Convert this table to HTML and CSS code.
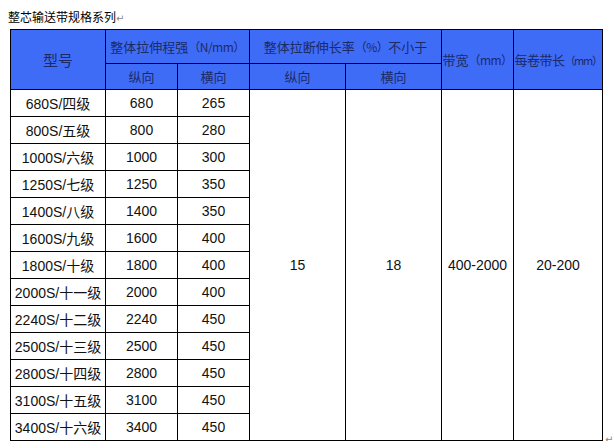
FILE: index.html
```html
<!DOCTYPE html>
<html lang="zh">
<head>
<meta charset="utf-8">
<link rel="stylesheet" href="styles.css">
</head>
<body>
<p class="title">整芯输送带规格系列<span class="mark">↵</span></p>
<div class="wrap">
<table class="spec">
  <colgroup>
    <col class="c1"><col class="c2"><col class="c3"><col class="c4"><col class="c5"><col class="c6"><col class="c7">
  </colgroup>
  <thead>
    <tr class="h1">
      <th rowspan="2" class="model">型号</th>
      <th colspan="2">整体拉伸程强<span class="unit">（N/mm）</span></th>
      <th colspan="2">整体拉断伸长率<span class="unit">（%）</span>不小于</th>
      <th rowspan="2">带宽<span class="unit">（mm）</span></th>
      <th rowspan="2" class="last">每卷带长<span class="unit">（mm）</span></th>
    </tr>
    <tr class="h2">
      <th>纵向</th><th>横向</th><th>纵向</th><th>横向</th>
    </tr>
  </thead>
  <tbody>
    <tr><td>680S/四级</td><td>680</td><td>265</td><td rowspan="13">15</td><td rowspan="13">18</td><td rowspan="13">400-2000</td><td rowspan="13">20-200</td></tr>
    <tr><td>800S/五级</td><td>800</td><td>280</td></tr>
    <tr><td>1000S/六级</td><td>1000</td><td>300</td></tr>
    <tr><td>1250S/七级</td><td>1250</td><td>350</td></tr>
    <tr><td>1400S/八级</td><td>1400</td><td>350</td></tr>
    <tr><td>1600S/九级</td><td>1600</td><td>400</td></tr>
    <tr><td>1800S/十级</td><td>1800</td><td>400</td></tr>
    <tr><td>2000S/十一级</td><td>2000</td><td>400</td></tr>
    <tr><td>2240S/十二级</td><td>2240</td><td>450</td></tr>
    <tr><td>2500S/十三级</td><td>2500</td><td>450</td></tr>
    <tr><td>2800S/十四级</td><td>2800</td><td>450</td></tr>
    <tr><td>3100S/十五级</td><td>3100</td><td>450</td></tr>
    <tr><td>3400S/十六级</td><td>3400</td><td>450</td></tr>
  </tbody>
</table>
<span class="mark end">↵</span>
</div>
</body>
</html>
```
FILE: styles.css
```css
html, body {
  margin: 0;
  padding: 0;
  background: #fff;
}
body {
  padding: 9px 0 0 8px;
  font-family: "Liberation Sans", "Noto Sans CJK SC", sans-serif;
  color: #111;
}
.title {
  margin: 0 0 5px 0;
  font-family: "Noto Sans CJK SC", sans-serif;
  font-size: 12px;
  line-height: 15px;
  height: 15px;
  color: #000;
}
.mark {
  color: #888;
  font-family: "DejaVu Sans", sans-serif;
  font-size: 10px;
}
.wrap {
  display: flex;
  align-items: flex-end;
  padding-left: 2px;
}
.end {
  margin-left: 2px;
  margin-bottom: -4px;
}
.spec {
  border-collapse: collapse;
  table-layout: fixed;
  width: 593px;
}
.c1 { width: 95px; }
.c2 { width: 72px; }
.c3 { width: 72px; }
.c4 { width: 96px; }
.c5 { width: 96px; }
.c6 { width: 72px; }
.c7 { width: 89px; }
.spec th, .spec td {
  border: 1px solid #000;
  padding: 0;
  text-align: center;
  white-space: nowrap;
  overflow: hidden;
}
.spec th {
  background: #3f6cf6;
  color: #1c2a66;
  font-family: "Noto Sans CJK SC", sans-serif;
  font-weight: normal;
  font-size: 13px;
}
.spec th .unit {
  font-size: 12px;
  letter-spacing: -0.5px;
}
.spec th.last {
  letter-spacing: -0.5px;
}
.spec th.last .unit {
  font-size: 11px;
  letter-spacing: -1.3px;
}
.spec .h1 th { height: 33px; }
.spec .h2 th { height: 25px; }
.spec th.model { font-size: 15px; }
.spec td {
  height: 26px;
  font-size: 14px;
  color: #111;
}
```
